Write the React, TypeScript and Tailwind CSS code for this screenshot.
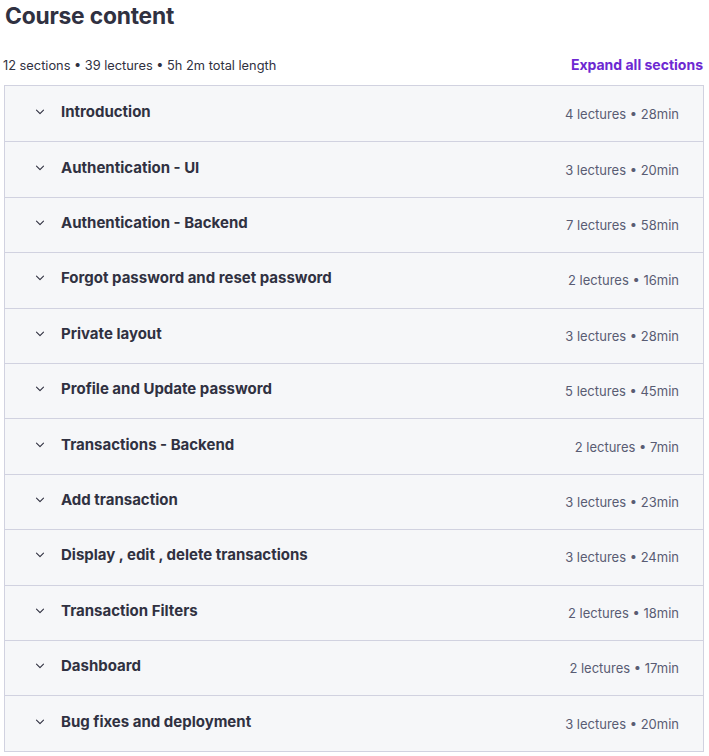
import React from "react";

const sections: [string, string][] = [
  ["Introduction", "4 lectures • 28min"],
  ["Authentication - UI", "3 lectures • 20min"],
  ["Authentication - Backend", "7 lectures • 58min"],
  ["Forgot password and reset password", "2 lectures • 16min"],
  ["Private layout", "3 lectures • 28min"],
  ["Profile and Update password", "5 lectures • 45min"],
  ["Transactions - Backend", "2 lectures • 7min"],
  ["Add transaction", "3 lectures • 23min"],
  ["Display , edit , delete transactions", "3 lectures • 24min"],
  ["Transaction Filters", "2 lectures • 18min"],
  ["Dashboard", "2 lectures • 17min"],
  ["Bug fixes and deployment", "3 lectures • 20min"],
];

function Chevron() {
  return (
    <svg width="10" height="6" viewBox="0 0 10 6" fill="none" className="shrink-0">
      <path d="M1.5 1.2l3.5 3.5 3.5-3.5" stroke="#303141" strokeWidth="1.1" strokeLinecap="round" strokeLinejoin="round" />
    </svg>
  );
}

export default function App() {
  return (
    <div className="w-[709px] h-[756px] bg-white text-[#303141] overflow-hidden" style={{ fontFamily: "Inter, 'Noto Sans', sans-serif" }}>
      <h2 className="pl-[5px] pt-[2px] h-[34px] text-[22.8px] leading-[28px] font-bold tracking-[-0.2px]">Course content</h2>
      <div className="flex items-end justify-between pl-[3px] pr-[6px] h-[51px] pb-[10px]">
        <span className="text-[12.8px] leading-[18px] text-[#303141]">12 sections • 39 lectures • 5h 2m total length</span>
        <button className="text-[14px] leading-[18px] font-bold text-[#6d28d2] pb-[1px]">Expand all sections</button>
      </div>
      <div className="ml-[4px] w-[700px] border border-[#d1d2e0] bg-[#f6f7f9]">
        {sections.map(([title, meta], i) => (
          <div key={i} className={`flex items-center justify-between h-[55.42px] pl-[30px] pr-[24px] ${i === 0 ? "" : "border-t border-[#d1d2e0]"}`}>
            <div className="flex items-center gap-[16px] pb-[4px]">
              <Chevron />
              <span className="text-[15px] leading-[20px] font-bold">{title}</span>
            </div>
            <span className="text-[13px] leading-[20px] text-[#595c73]">{meta}</span>
          </div>
        ))}
      </div>
    </div>
  );
}
